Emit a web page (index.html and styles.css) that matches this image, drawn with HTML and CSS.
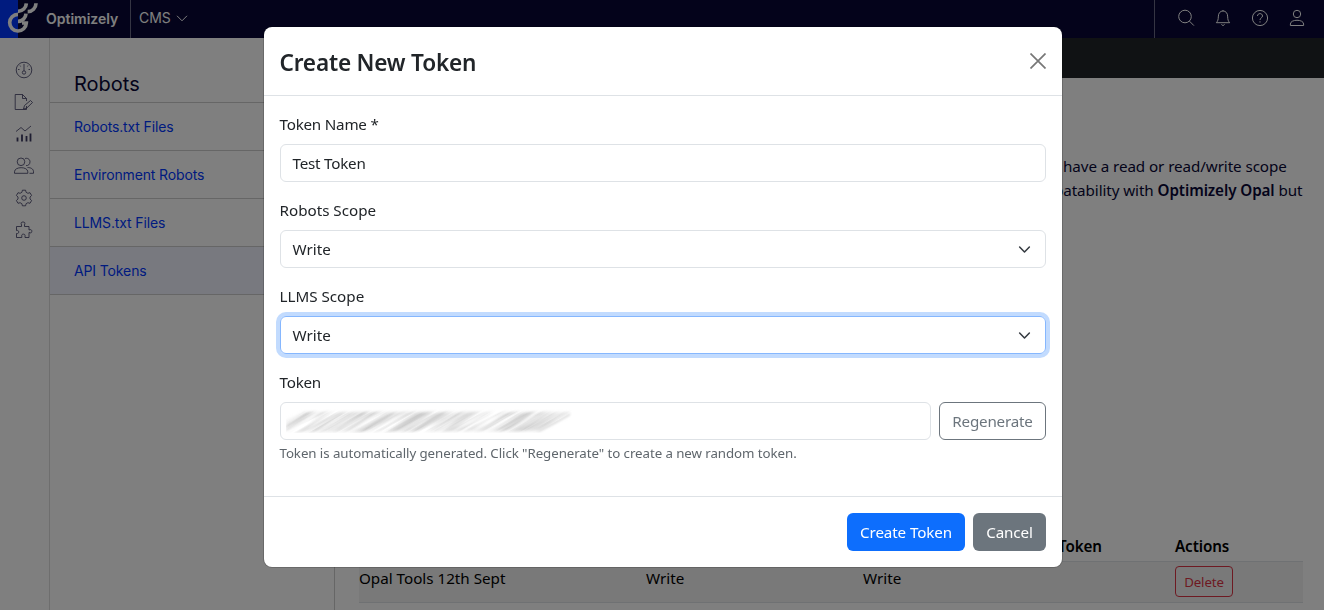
FILE: index.html
```html
<!DOCTYPE html>
<html lang="en">
<head>
<meta charset="utf-8">
<title>Robots - API Tokens</title>
<link rel="stylesheet" href="styles.css">
</head>
<body>
<div class="page">
  <header class="topbar">
    <div class="brand">
      <svg class="logo" viewBox="0 0 120 114"><rect width="54" height="114" fill="#0037ff"/><g fill="none" stroke="#fff" stroke-width="11"><path d="M54 43A25 25 0 1 0 79 69H66"/><path d="M54 64A24 24 0 0 0 78 41"/><path d="M54 34A25 25 0 0 0 79 10"/><path d="M83 35A25 25 0 0 0 108 10"/></g></svg>
      <span class="brand-name">Optimizely</span>
    </div>
    <div class="product"><span>CMS</span><svg width="12" height="7" viewBox="0 0 12 7"><path d="M1 .8l5 5 5-5"/></svg></div>
    <div class="tools">
      <svg viewBox="0 0 18 18"><circle cx="8" cy="7.5" r="6.3"/><path d="M12.4 12.1l4.5 4.5"/></svg>
      <svg viewBox="0 0 18 18"><path d="M2.3 13.7c1.5-1.5 2-3.3 2-5.8C4.300 4 6.300 2 9 2s4.700 2 4.700 5.900c0 2.500.5 4.300 2 5.800zM9 2V1M7.400 15.400c.6 1.300 2.600 1.300 3.200 0"/></svg>
      <svg viewBox="0 0 18 18"><circle cx="9" cy="9" r="7.600"/><path d="M6.500 7c0-3.200 5-3.200 5 0 0 2-2.500 1.700-2.500 4M9 12.300v1.200"/></svg>
      <svg viewBox="0 0 18 18"><circle cx="9" cy="5" r="3.700"/><path d="M2.400 16.500v-1.500c0-5 13.200-5 13.200 0v1.500z"/></svg>
    </div>
  </header>
  <div class="workspace">
    <nav class="rail">
      <svg viewBox="0 0 20 20"><circle cx="10" cy="10" r="7.800"/><circle cx="10" cy="12.500" r="1.700"/><path d="M10 10.800V4M6 5.500l.6 1M14 5.500l-.6 1M4 9.500h1.500M14.500 9.500H16"/></svg>
      <svg viewBox="0 0 20 20"><path d="M12.500 14v3.500h-11.300v-15h7.300l4 4v2.500M8.500 2.500v4h4M9.500 17l1-3.500 6-5 2 2-5.700 5.500z"/></svg>
      <svg viewBox="0 0 20 20"><path d="M2 7.500l5-4 4 3.500 6-5"/><path class="bars" d="M3.500 17.500v-4M8 17.500v-7M12.500 17.500v-5.500M16.500 17.500V9.500"/></svg>
      <svg viewBox="0 0 20 20"><circle cx="7" cy="5.800" r="3.800"/><path d="M.5 17.300v-1.500c0-5.500 13.300-5.500 13.300 0v1.500zM11 2.600c2.200-1 5 .5 5 3.200s-2 4-4 3.800M13.500 11.500c3 0 6 1.200 6 4.300v1.500h-4"/></svg>
      <svg viewBox="0 0 20 20"><circle cx="10" cy="10" r="2.300"/><path d="M8.400 2.200h3.200l.5 2.100 1.800 1 2.100-.6 1.600 2.800-1.600 1.500v2l1.600 1.500-1.600 2.800-2.100-.6-1.800 1-.5 2.100H8.400l-.5-2.100-1.800-1-2.100.6-1.600-2.800L4 11V9L2.400 7.500 4 4.700l2.100.6 1.800-1z"/></svg>
      <svg viewBox="0 0 20 20"><path d="M2.500 6.500h5V5c-1-2.500 0-3 1.500-3s2.500.5 1.500 3v1.500H15V10c2-.8 2.800-.3 2.800 1.300s-.8 2-2.800 1.200v5h-4v-1.500c.8-2.500-4-2.500-3.200 0v1.500H2.500v-4c3 .8 3-3.800 0-3z"/></svg>
    </nav>
    <aside class="menu">
      <h2>Robots</h2>
      <a>Robots.txt Files</a>
      <a>Environment Robots</a>
      <a>LLMS.txt Files</a>
      <a class="active">API Tokens</a>
    </aside>
    <main class="content">
      <div class="band"></div>
      <div class="intro"><p class="line-one">have a read or read/write scope</p><p class="line-two">patability with <b>Optimizely Opal</b> but</p></div>
      <div class="table">
        <div class="row head"><span></span><span></span><span></span><span>Token</span><span>Actions</span></div>
        <div class="row item"><span>Opal Tools 12th Sept</span><span>Write</span><span>Write</span><span></span><span><button class="delete">Delete</button></span></div>
      </div>
    </main>
  </div>
</div>
<div class="backdrop">
  <section class="modal">
    <header class="modal-head"><h1>Create New Token</h1><svg class="close" viewBox="0 0 16 16"><path d="M.5.5l15 15M15.500.5l-15 15"/></svg></header>
    <div class="modal-body">
      <div class="field"><label class="tight">Token Name *</label><div class="control"><span class="tight">Test Token</span></div></div>
      <div class="field"><label>Robots Scope</label><div class="control"><span>Write</span><svg class="chev" viewBox="0 0 16 16"><path d="M2 5l6 6 6-6"/></svg></div></div>
      <div class="field"><label>LLMS Scope</label><div class="control focus"><span>Write</span><svg class="chev" viewBox="0 0 16 16"><path d="M2 5l6 6 6-6"/></svg></div></div>
      <div class="field"><label class="tight">Token</label>
        <div class="token-row">
          <div class="control token"><svg class="smudge" viewBox="0 0 286 24">
            <defs>
              <filter id="streak" x="0" y="0" width="100%" height="100%"><feTurbulence type="fractalNoise" baseFrequency=".012 .2" numOctaves="3" seed="8"/><feColorMatrix values="0 0 0 0 .48 0 0 0 0 .48 0 0 0 0 .48 1.400 0 0 0 -.34"/></filter>
              <filter id="soft" x="-5%" y="-20%" width="110%" height="140%"><feGaussianBlur stdDeviation="1.400"/></filter>
              <mask id="shape"><path filter="url(#soft)" fill="#fff" d="M0 23V12L18 3H284V7L254 22Z"/></mask>
            </defs>
            <g mask="url(#shape)"><rect x="-50" y="-100" width="400" height="300" transform="rotate(-30 143 12)" filter="url(#streak)"/></g>
          </svg></div>
          <button class="regen">Regenerate</button>
        </div>
        <p class="hint">Token is automatically generated. Click "Regenerate" to create a new random token.</p>
      </div>
    </div>
    <footer class="modal-foot"><button class="primary">Create Token</button><button class="cancel">Cancel</button></footer>
  </section>
</div>
</body>
</html>
```
FILE: styles.css
```css
* { box-sizing: border-box; }
body { margin: 0; height: 610px; overflow: hidden; background: #fff; color: #212529; font: 15.2px/24px "Noto Sans", "Open Sans", sans-serif; }
h1, h2, p { margin: 0; }
button { font: inherit; border-radius: 6px; padding: 0; white-space: nowrap; letter-spacing: -.12px; }
svg { fill: none; stroke: currentColor; flex: none; }
.page { height: 610px; display: flex; flex-direction: column; color: #080736; }
.topbar { height: 38px; flex: none; display: flex; align-items: stretch; background: #080736; color: #fff; font-family: Inter, sans-serif; }
.brand { width: 131px; display: flex; align-items: center; border-right: 1px solid #6b6a86; }
.logo { width: 40px; height: 38px; stroke: none; }
.brand-name { margin-left: 6px; font-size: 14px; font-weight: 600; }
.product { display: flex; align-items: center; gap: 5px; padding: 0 0 2px 8px; font-size: 14px; flex: 1; }
.tools { width: 170px; border-left: 1px solid #6b6a86; padding: 0 0 2px 22px; display: flex; align-items: center; gap: 19.100px; }
.tools svg { width: 18px; height: 18px; stroke-width: 1; }
.workspace { flex: 1; display: flex; min-height: 0; }
.rail { width: 50px; border-right: 1px solid #ddd; display: flex; flex-direction: column; align-items: center; padding: 22px 2px 0 0; gap: 12px; color: #3c3b62; }
.rail svg { width: 20px; height: 20px; stroke-width: .8; }
.rail .bars { stroke-width: 1.800; }
.menu { width: 285px; border-right: 1px solid #ccc; font-family: Inter, sans-serif; }
.menu h2 { height: 65px; padding: 34px 0 0 24px; border-bottom: 1px solid #ccc; font-size: 20px; font-weight: 400; line-height: 24px; }
.menu a { height: 48px; display: flex; align-items: center; padding-left: 24px; border-bottom: 1px solid #ccc; color: #0037ff; font-size: 14px; letter-spacing: -.13px; }
.menu .active { background: #f0f2ff; }
.content { flex: 1; display: flex; flex-direction: column; }
.band { height: 40px; background: #212529; }
.intro { margin: 76px 0 0 715px; white-space: nowrap; letter-spacing: -.08px; }
.line-one { padding-left: 13px; }
.line-two { padding-left: 4px; }
.intro b { font-weight: 600; }
.table { margin: 332px 21px 0 24px; color: #000; }
.row { display: grid; grid-template-columns: 287px 217px 195px 117px 1fr; border-bottom: 1px solid #dee2e6; }
.head { height: 28px; font-weight: 600; letter-spacing: -.1px; }
.item { height: 41px; background: #f2f2f2; padding-top: 4px; }
.delete { display: block; width: 58px; height: 31px; border: 1px solid #dc3545; color: #dc3545; background: transparent; font-size: 13.300px; border-radius: 4px; }
.backdrop { position: fixed; inset: 0; background: rgba(0,0,0,.5); padding: 27px 262px 0 264px; }
.modal { width: 798px; height: 540px; background: #fff; border-radius: 8px; display: flex; flex-direction: column; box-shadow: 0 0 0 1px rgba(0,0,0,.175); }
.modal-head { height: 69px; border-bottom: 1px solid #dee2e6; display: flex; align-items: center; justify-content: space-between; padding: 3px 16px 0; }
.modal-head h1 { font-size: 22.600px; font-weight: 600; line-height: 30px; letter-spacing: -.2px; margin-left: -.5px; }
.close { width: 16px; height: 16px; margin-bottom: 4px; color: #777; stroke-width: 1.700; }
.modal-body { flex: 1; padding: 16px; }
.field { margin-bottom: 16px; }
.field label { display: block; height: 24px; margin: 0 0 8px -.5px; }
.field .tight { letter-spacing: -.22px; }
.control { height: 38px; display: flex; align-items: center; justify-content: space-between; border: 1px solid #dee2e6; border-radius: 6px; padding: 0 14px 0 11.500px; }
.chev { width: 13px; height: 13px; stroke: #343a40; stroke-width: 1.900; stroke-linecap: round; stroke-linejoin: round; }
.focus { border-color: #86b7fe; box-shadow: 0 0 0 4px #c2dbfe; }
.token-row { display: flex; gap: 8px; }
.token { flex: 1; padding: 0 5px; }
.smudge { width: 286px; height: 24px; stroke: none; }
.regen { width: 107px; height: 38px; background: #fff; color: #6c757d; border: 1px solid #6c757d; letter-spacing: -.2px; }
.hint { margin: 3px 0 0 -.5px; font-size: 13.300px; line-height: 20px; letter-spacing: -.07px; color: #5f666c; white-space: nowrap; }
.modal-foot { height: 71px; border-top: 1px solid #dee2e6; display: flex; justify-content: flex-end; gap: 8px; padding: 16px; }
.modal-foot button { height: 38px; border: 0; color: #fff; }
.modal-foot .primary { width: 118px; background: #0d6efd; }
.modal-foot .cancel { width: 73px; background: #6c757d; }
```
